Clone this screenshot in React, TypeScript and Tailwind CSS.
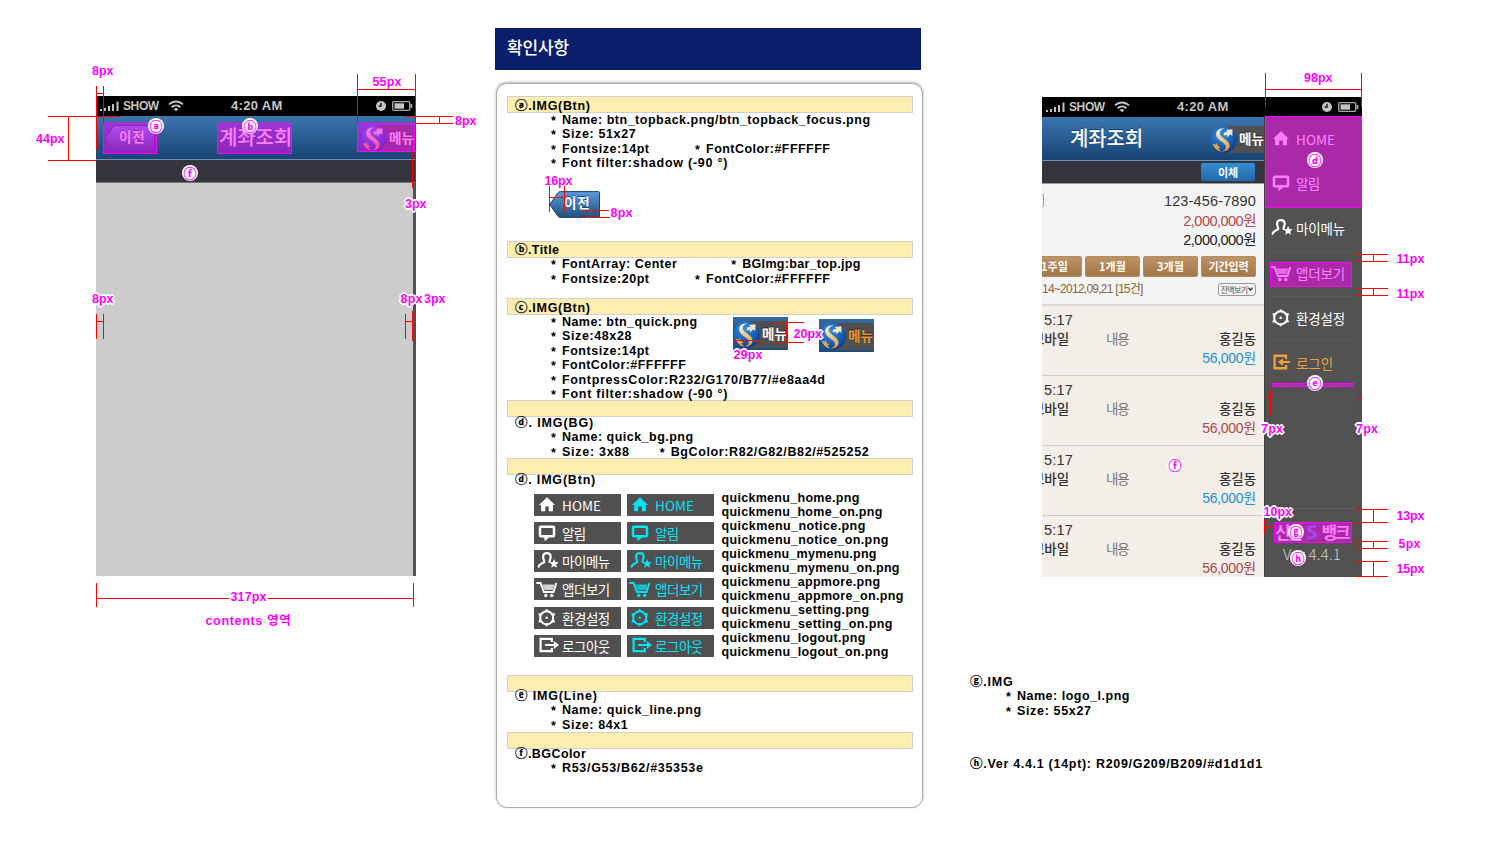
import { useLayoutEffect, useRef, type ReactNode } from "react";

/* Inline text whose tracking is adjusted so the run occupies a given width. */
function Fit({ w, className = "", children }: { w: number; className?: string; children: ReactNode }) {
  const ref = useRef<HTMLSpanElement>(null);
  useLayoutEffect(() => {
    const el = ref.current;
    if (!el) return;
    el.style.letterSpacing = "0px";
    const count = (el.textContent ?? "").length;
    const natural = el.getBoundingClientRect().width;
    el.style.letterSpacing = `${(w - natural) / Math.max(1, count - 0.5)}px`;
  }, [w, children]);
  return (
    <span ref={ref} className={`inline-block whitespace-pre ${className}`}>
      {children}
    </span>
  );
}

const korean = "font-['Noto_Sans_CJK_KR',sans-serif]";
const figures = "font-['Liberation_Sans','Noto_Sans_CJK_KR',sans-serif]";
const spec = "font-['Liberation_Sans','Noto_Sans_CJK_KR',sans-serif] text-[12.5px] font-bold";

/* ---------- shared phone pieces ---------- */

function StatusBar() {
  return (
    <div className="flex h-5 w-full shrink-0 items-center bg-black font-['Liberation_Sans',sans-serif] text-[13px] font-bold leading-5 text-[#c4c4c4]">
      <svg className="ml-1 shrink-0" width="19" height="10" viewBox="0 0 19 10" fill="#c4c4c4">
        <rect x="0" y="8" width="2" height="2" />
        <rect x="4" y="7" width="2" height="3" />
        <rect x="8" y="5" width="2" height="5" />
        <rect x="12" y="3" width="2" height="7" />
        <rect x="16.5" y="0.5" width="2" height="9.5" />
      </svg>
      <span className="ml-1 w-[45px] text-[12px]">
        <Fit w={36}>SHOW</Fit>
      </span>
      <svg className="shrink-0" width="16" height="12" viewBox="0 0 16 12" fill="none" stroke="#c4c4c4" strokeWidth="1.9">
        <path d="M1 4.4C5 .6 11 .6 15 4.4" />
        <path d="M3.6 7.2C6.2 4.9 9.8 4.9 12.4 7.2" />
        <path d="M8 11.2 5.6 8.9C7 7.8 9 7.8 10.4 8.9Z" fill="#c4c4c4" stroke="none" />
      </svg>
      <span className="ml-[47px] w-[145px]">
        <Fit w={51.5}>4:20 AM</Fit>
      </span>
      <svg className="shrink-0" width="10" height="10" viewBox="0 0 10 10">
        <circle cx="5" cy="5" r="5" fill="#c4c4c4" />
        <path d="M5 1.8V5.2H2.6" stroke="#000" strokeWidth="1.3" fill="none" />
      </svg>
      <svg className="ml-1.5 shrink-0" width="21" height="10" viewBox="0 0 21 10">
        <rect x=".7" y=".7" width="17" height="8.6" rx="1" fill="none" stroke="#aaa" strokeWidth="1.3" />
        <rect x="2.5" y="2.3" width="9.5" height="5.4" fill="#c4c4c4" />
        <path d="M18.5 3h1.8v4h-1.8z" fill="#aaa" />
      </svg>
    </div>
  );
}

function SLogo() {
  return (
    <svg className="relative shrink-0" width="27" height="27" viewBox="0 0 27 27">
      <defs>
        <radialGradient id="orb" cx=".4" cy=".3" r=".75">
          <stop offset="0" stopColor="#3a92e0" />
          <stop offset=".6" stopColor="#1560b8" />
          <stop offset="1" stopColor="#0c3a80" />
        </radialGradient>
        <linearGradient id="ribbon" x1="0" y1="0" x2="0" y2="1">
          <stop offset="0" stopColor="#fff" />
          <stop offset=".35" stopColor="#f6d9a0" />
          <stop offset="1" stopColor="#e0912f" />
        </linearGradient>
      </defs>
      <circle cx="13.5" cy="13.5" r="13.3" fill="url(#orb)" />
      <path d="M14 6.500 17.500 5.800 15.800 4 22.500 3.300 22.300 10 20.300 8.300 17.500 11.500 17.200 9 13.800 9.500Z" fill="#fbe6c4" />
      <path
        d="M14.500 2.600C9.500 1.600 5.500 4.800 6.200 9.200C7 14 13.200 15.800 15.200 19C16.800 21.800 15.400 24.300 11.500 25.600C16 26 19.600 23.600 19.600 19.600C19.500 14.800 12.200 12.200 10.300 9C8.700 6.200 10.500 3.600 14.500 2.600Z"
        fill="url(#ribbon)"
      />
      <path d="M2.500 17.500 5.500 18.800 6.500 16.800 7.800 20 10.800 21.500 8.300 22.200 11 25.500C7.500 25 4 22 2.500 17.500Z" fill="#eda640" />
    </svg>
  );
}

function MenuTab({ color = "text-white" }: { color?: string }) {
  return (
    <div className={`relative flex h-[27px] items-start ${korean} text-[13.5px] font-bold leading-[25px] ${color} [text-shadow:0_-1px_0_#222]`}>
      <div className="absolute inset-y-0 left-3 right-0 bg-[#505052]" />
      <SLogo />
      <Fit w={25} className="relative ml-[2px]">
        메뉴
      </Fit>
    </div>
  );
}

function BackButton({ id }: { id: string }) {
  return (
    <div className="grid h-[27px] w-[51px]">
      <svg className="col-start-1 row-start-1" width="51" height="27" viewBox="0 0 51 27">
        <defs>
          <linearGradient id={id} x1="0" y1="0" x2="0" y2="1">
            <stop offset="0" stopColor="#5c9bdd" />
            <stop offset=".5" stopColor="#3c74ad" />
            <stop offset="1" stopColor="#25527f" />
          </linearGradient>
        </defs>
        <path d="M.8 13.500 8.500 2.200Q9.600.6 11.500.6H49.500Q50.500.6 50.500 1.600V25.400Q50.500 26.400 49.500 26.400H11.500Q9.600 26.400 8.500 24.800Z" fill={`url(#${id})`} stroke="#1c4472" />
      </svg>
      <span className={`z-10 col-start-1 row-start-1 pl-[15px] ${korean} text-[13.500px] font-bold leading-[22px] text-white [text-shadow:0_-1px_0_#1c4472]`}>
        <Fit w={26}>이전</Fit>
      </span>
    </div>
  );
}

/* ---------- menu icons, drawn on a 24x22 field ---------- */

type IconName = "home" | "notice" | "mymenu" | "appmore" | "setting" | "logout" | "login";

function MenuIcon({ name }: { name: IconName }) {
  return (
    <svg className="shrink-0" width="24" height="22" viewBox="0 0 24 22" fill="none" stroke="currentColor">
      {name === "home" && (
        <path d="M11 3.200 19 11H16.900V17.300H12.800V12.600H9.200V17.300H5.100V11H3Z" fill="currentColor" stroke="none" />
      )}
      {name === "notice" && (
        <>
          <rect x="4" y="4.700" width="14" height="9.600" rx="1" strokeWidth="2.500" />
          <path d="M8 14.500H14L8.800 19.200Z" fill="currentColor" stroke="none" />
        </>
      )}
      {name === "mymenu" && (
        <>
          <path
            d="M2.600 16.600C3.600 14 5.400 13.300 7.700 12.500C9.400 11.800 7 10 7.100 6.700C7.200 2 14.600 2 14.700 6.700C14.700 9.200 13.200 10.500 13.600 12"
            strokeWidth="2.200"
            strokeLinecap="round"
          />
          <path d="M18.100 8.900 19.400 12 22.700 12.300 20.200 14.500 21 17.700 18.100 16 15.200 17.700 16 14.500 13.500 12.300 16.800 12Z" fill="currentColor" stroke="none" />
        </>
      )}
      {name === "appmore" && (
        <>
          <path d="M.3 5H4.500L8 14H17.500L20.300 5" strokeWidth="2" />
          <path d="M6.500 6.500H18.300L16.600 12H8.600Z" fill="currentColor" stroke="none" opacity=".75" />
          <circle cx="9.800" cy="17.500" r="1.700" fill="currentColor" stroke="none" />
          <circle cx="15.800" cy="17.500" r="1.700" fill="currentColor" stroke="none" />
        </>
      )}
      {name === "setting" && (
        <>
          <circle cx="10.700" cy="10.800" r="6.500" strokeWidth="2" />
          <path d="M10.700 1.800 13.200 4.800H8.200ZM10.700 19.800 8.200 16.800H13.200ZM2.200 6.500 6 6 3.700 10ZM19.200 6.500 15.400 6 17.700 10ZM2.200 15.200 6 15.700 3.700 11.700ZM19.200 15.200 15.400 15.700 17.700 11.700Z" fill="currentColor" stroke="none" />
          <circle cx="10.700" cy="10.800" r="1.300" fill="currentColor" stroke="none" />
        </>
      )}
      {name === "logout" && (
        <>
          <path d="M15.800 7V3.800H4.600V16.200H15.800V13" strokeWidth="2.200" />
          <path d="M9 10H18.500" strokeWidth="2" />
          <path d="M17.800 6 23 10 17.800 14Z" fill="currentColor" stroke="none" />
        </>
      )}
      {name === "login" && (
        <>
          <path d="M16 7V3.800H4.600V16.200H16V13" strokeWidth="2.400" />
          <path d="M12 10H20" strokeWidth="2" />
          <path d="M13 6.200 7.800 10 13 13.800Z" fill="currentColor" stroke="none" />
        </>
      )}
    </svg>
  );
}

function MenuLabel({ icon, text, w }: { icon: IconName; text: string; w: number }) {
  return (
    <div className={`flex h-[22px] items-center ${korean} text-[13.500px] font-normal leading-[22px]`}>
      <MenuIcon name={icon} />
      <Fit w={w} className="ml-[2px]">
        {text}
      </Fit>
    </div>
  );
}

/* ---------- left phone ---------- */

function ContentPhone() {
  return (
    <div className="flex h-[480px] w-80 flex-col bg-[#ccc]">
      <StatusBar />
      <div className="flex h-11 shrink-0 items-start border-b border-[#6d93bd] bg-linear-to-b from-[#3b76b0] to-[#194474] pl-2 pt-[9px]">
        <BackButton id="backA" />
        <span className={`ml-16 w-[73px] ${korean} text-[20px] font-medium leading-6 text-white`}>
          <Fit w={73}>계좌조회</Fit>
        </span>
        <div className="ml-auto w-[56px]">
          <MenuTab />
        </div>
      </div>
      <div className="h-[23px] shrink-0 border-b border-[#7b757c] bg-[#35353e]" />
      <div className="flex flex-1 justify-end">
        <div className="w-[3px] bg-[#525252]" />
      </div>
    </div>
  );
}

/* ---------- centre sheet ---------- */

type Piece = { t: string; w: number; star?: boolean; gap?: number };

function Line({ parts }: { parts: Piece[] }) {
  return (
    <div className={`flex h-[14.4px] whitespace-pre leading-[14.4px] ${parts[0].star ? "pl-11" : "pl-2"}`}>
      {parts.map((p, i) => (
        <span key={i} className="flex" style={{ marginLeft: p.gap ?? 0 }}>
          {p.star && <span className="w-[11px] pt-px">*</span>}
          {p.star ? (
            <Fit w={p.w - 11}>{p.t}</Fit>
          ) : (
            <Fit w={p.w}>
              <span className="[-webkit-text-stroke:0.250px_currentColor]">{p.t.slice(0, 1)}</span>
              {p.t.slice(1)}
            </Fit>
          )}
        </span>
      ))}
    </div>
  );
}

function Section({ h, pt, lines, children }: { h: number; pt: number; lines: Piece[][]; children?: ReactNode }) {
  return (
    <section className="grid shrink-0 content-start" style={{ height: h }}>
      <div className="col-start-1 row-start-1 h-[17px] border border-[#cfcfd2] bg-[#ffeeb0]" />
      <div className="z-10 col-start-1 row-start-1" style={{ paddingTop: pt }}>
        {lines.map((l, i) => (
          <Line key={i} parts={l} />
        ))}
        {children}
      </div>
    </section>
  );
}

const s = (t: string, w: number, gap?: number): Piece => ({ t, w, star: true, gap });

const menuItems: { icon: IconName; text: string; w: number; file: string; fw: number; onw: number }[] = [
  { icon: "home", text: "HOME", w: 39, file: "home", fw: 138, onw: 161 },
  { icon: "notice", text: "알림", w: 24, file: "notice", fw: 144, onw: 167 },
  { icon: "mymenu", text: "마이메뉴", w: 48, file: "mymenu", fw: 155, onw: 178 },
  { icon: "appmore", text: "앱더보기", w: 48, file: "appmore", fw: 158.7, onw: 182 },
  { icon: "setting", text: "환경설정", w: 48, file: "setting", fw: 147.7, onw: 171 },
  { icon: "logout", text: "로그아웃", w: 48, file: "logout", fw: 144, onw: 167 },
];

function QuickMenuSheet() {
  return (
    <div className="flex pl-[27px] pt-[6.600px]">
      {["text-white", "text-[#00e4f4]"].map((c) => (
        <div key={c} className="mr-1.5 flex w-[87px] flex-col gap-[6.200px]">
          {menuItems.map((m) => (
            <div key={m.icon} className={`h-[22px] bg-[#505050] pl-[2px] ${c}`}>
              <MenuLabel icon={m.icon} text={m.text} w={m.w} />
            </div>
          ))}
        </div>
      ))}
      <div className="-mt-[2.500px] ml-[1.500px] leading-[14px]">
        {menuItems.map((m) => (
          <div key={m.file} className="flex flex-col items-start">
            <Fit w={m.fw}>{`quickmenu_${m.file}.png`}</Fit>
            <Fit w={m.onw}>{`quickmenu_${m.file}_on.png`}</Fit>
          </div>
        ))}
      </div>
    </div>
  );
}

function SpecSheet() {
  return (
    <div className="flex w-[428px] flex-col">
      <h1 className={`h-[42px] w-[426px] bg-[#0b1e6b] pl-3 ${korean} text-[17px] font-medium leading-[38px] text-white`}>
        <Fit w={62}>확인사항</Fit>
      </h1>
      <div className={`ml-px mt-[13px] flex h-[725px] w-[427px] flex-col rounded-[11px] border border-[#adadad] bg-white pl-[10px] pr-[9px] pt-3 shadow-[0_-1px_3px_rgba(0,0,0,0.3)] ${spec}`}>
        <Section
          h={145}
          pt={2.500}
          lines={[
            [{ t: "ⓐ.IMG(Btn)", w: 75.3 }],
            [s("Name: btn_topback.png/btn_topback_focus.png", 319.3)],
            [s("Size: 51x27", 85)],
            [s("Fontsize:14pt", 98.3), s("FontColor:#FFFFFF", 135, 45.500)],
            [s("Font filter:shadow (-90 °)", 176.7)],
          ]}
        >
          <div className="pl-[42px] pt-[20.500px]">
            <BackButton id="backB" />
          </div>
        </Section>
        <Section
          h={57}
          pt={2}
          lines={[
            [{ t: "ⓑ.Title", w: 44.3 }],
            [s("FontArray: Center", 126), s("BGImg:bar_top.jpg", 129.3, 54)],
            [s("Fontsize:20pt", 98.3), s("FontColor:#FFFFFF", 135, 45.500)],
          ]}
        />
        <div className="relative">
          <Section
            h={102}
            pt={2.600}
            lines={[
              [{ t: "ⓒ.IMG(Btn)", w: 75.3 }],
              [s("Name: btn_quick.png", 146.3)],
              [s("Size:48x28", 80.7)],
              [s("Fontsize:14pt", 98.3)],
              [s("FontColor:#FFFFFF", 135)],
              [s("FontpressColor:R232/G170/B77/#e8aa4d", 274.3)],
              [s("Font filter:shadow (-90 °)", 176.7)],
            ]}
          />
          <div className="absolute left-[226px] top-[19px] z-20 flex items-start gap-[31px]">
            <div className="h-[33px] w-[55px] overflow-hidden bg-linear-to-b from-[#35699f] to-[#1d4c80] pt-1">
              <MenuTab />
            </div>
            <div className="mt-[2px] h-[33px] w-[55px] overflow-hidden bg-linear-to-b from-[#35699f] to-[#1d4c80] pt-1">
              <MenuTab color="text-[#e8952f]" />
            </div>
          </div>
        </div>
        <Section
          h={58}
          pt={15.800}
          lines={[
            [{ t: "ⓓ. IMG(BG)", w: 78.7 }],
            [s("Name: quick_bg.png", 142.3)],
            [s("Size: 3x88", 78.3), s("BgColor:R82/G82/B82/#525252", 209.3, 30)],
          ]}
        />
        <Section h={217} pt={14.900} lines={[[{ t: "ⓓ. IMG(Btn)", w: 80.7 }]]}>
          <QuickMenuSheet />
        </Section>
        <Section
          h={57}
          pt={14}
          lines={[[{ t: "ⓔ IMG(Line)", w: 82.3 }], [s("Name: quick_line.png", 150.3)], [s("Size: 84x1", 77)]]}
        />
        <Section h={60} pt={14.500} lines={[[{ t: "ⓕ.BGColor", w: 71 }], [s("R53/G53/B62/#35353e", 152.3)]]} />
      </div>
    </div>
  );
}

/* ---------- right phone ---------- */

function Period({ text, w, className = "" }: { text: string; w: number; className?: string }) {
  return (
    <div className={`flex h-[21px] w-[55px] shrink-0 items-center justify-center rounded-[2px] border border-[#b28c63] bg-linear-to-b from-[#bd9265] to-[#a3774a] text-[11px] font-bold text-white ${className}`}>
      <Fit w={w}>{text}</Fit>
    </div>
  );
}

function Transaction({ color }: { color: string }) {
  return (
    <div className="h-[70px] shrink-0 border-b border-[#cdcbc8] bg-[#f4eee8] pr-2 pt-[5px] leading-[19px] text-[#333]">
      <div className={`pl-[2px] text-[14.500px] ${figures}`}>
        <Fit w={29}>5:17</Fit>
      </div>
      <div className="-mt-px flex items-center text-[13.500px] font-medium">
        <span className="-ml-[10px] w-[74px]">
          <Fit w={37}>모바일</Fit>
        </span>
        <Fit w={23} className="font-normal text-[#777]">
          내용
        </Fit>
        <Fit w={37} className="ml-auto">
          홍길동
        </Fit>
      </div>
      <div className={`pt-px text-right text-[14px] ${figures} ${color}`}>
        <Fit w={54}>56,000원</Fit>
      </div>
    </div>
  );
}

function Account() {
  return (
    <div className={`flex h-[460px] w-[222px] flex-col overflow-hidden bg-[#f4f4f4] ${korean}`}>
      <div className="flex h-11 shrink-0 items-start border-b border-[#6d93bd] bg-linear-to-b from-[#3b76b0] to-[#194474] pl-7 pt-[9px]">
        <span className="text-[20px] font-medium leading-6 text-white [text-shadow:0_-1px_0_#17406e]">
          <Fit w={73}>계좌조회</Fit>
        </span>
        <div className="ml-auto w-[54px]">
          <MenuTab />
        </div>
      </div>
      <div className="flex h-[23px] shrink-0 items-start justify-end border-b border-[#999] bg-[#35353e] pr-[9px] pt-[2px]">
        <div className="flex h-[18px] w-[54px] items-center justify-center rounded-[2px] bg-linear-to-b from-[#3390d2] to-[#2368ac] text-[11px] font-bold leading-4 text-white">
          <Fit w={20}>이체</Fit>
        </div>
      </div>
      <div className="flex h-[72px] shrink-0 justify-between pr-2 pt-2 text-right text-[14.500px] leading-[19.500px]">
        <div className="mt-[2px] h-[13px] w-[2px] rounded-r-sm border-y border-r border-[#999]" />
        <div className={`flex flex-col items-end ${figures}`}>
          <Fit w={92} className="text-[#333]">
            123-456-7890
          </Fit>
          <Fit w={73} className="text-[#b2494e]">
            2,000,000원
          </Fit>
          <Fit w={73} className="text-[#222]">
            2,000,000원
          </Fit>
        </div>
      </div>
      <div className="flex shrink-0 justify-end gap-[3px] pr-2">
        <Period text="1주일" w={27} className="-ml-4" />
        <Period text="1개월" w={27} />
        <Period text="3개월" w={27} />
        <Period text="기간입력" w={40} />
      </div>
      <div className="flex h-[29px] shrink-0 items-center justify-between border-b-2 border-[#d8d8d8] pb-[3px] pr-2 text-[12px] text-[#8d6534]">
        <Fit w={101} className={figures}>
          14~2012,09,21 [15건]
        </Fit>
        <div className="flex h-[13px] w-[38px] items-center justify-center gap-px rounded-[3px] border border-[#999] bg-[#f0f0f0] text-[8px] leading-[11px] text-[#555]">
          <Fit w={27}>잔액보기</Fit>
          <svg width="5" height="4" viewBox="0 0 5 4" fill="none" stroke="#333" strokeWidth="1.300">
            <path d="M.5.800 2.500 3 4.500.800" />
          </svg>
        </div>
      </div>
      <Transaction color="text-[#1a91da]" />
      <Transaction color="text-[#a8494c]" />
      <Transaction color="text-[#1a91da]" />
      <Transaction color="text-[#a8494c]" />
    </div>
  );
}

const sideItems: { icon: IconName; text: string; w: number; tone: string }[] = [
  { icon: "home", text: "HOME", w: 39, tone: "text-white" },
  { icon: "notice", text: "알림", w: 24, tone: "text-white" },
  { icon: "mymenu", text: "마이메뉴", w: 49, tone: "text-white" },
  { icon: "appmore", text: "앱더보기", w: 49, tone: "text-white" },
  { icon: "setting", text: "환경설정", w: 49, tone: "text-white" },
  { icon: "login", text: "로그인", w: 37, tone: "text-[#e8a23c]" },
];

function QuickSide() {
  return (
    <div className={`flex h-[460px] w-[98px] flex-col border-l border-[#3e3e3e] bg-[#525252] pl-[6px] ${korean}`}>
      {sideItems.map((m) => (
        <div key={m.icon} className={`-ml-px h-[44.900px] w-[84px] shrink-0 border-b border-[#5b5b5b] pt-[10.500px] ${m.tone}`}>
          <MenuLabel icon={m.icon} text={m.text} w={m.w} />
        </div>
      ))}
      <div className="mt-[122px] w-[84px] whitespace-nowrap border-t border-[#5f5f5f] pl-[4px] pt-[12px]">
        <div className="flex h-[21px] text-[17px] font-bold leading-[21px] text-white">
          <Fit w={27}>신한</Fit>
          <span className="pl-[6px] pr-[4px] font-['Open_Sans',sans-serif] text-[20px] text-[#4a90ff]">S</span>
          <Fit w={28}>뱅크</Fit>
        </div>
        <div className="pl-[8px] pt-px text-[15px] font-light leading-[22px] text-[#d1d1d1]">
          <Fit w={58}>Ver 4.4.1</Fit>
        </div>
      </div>
    </div>
  );
}

function MenuPhone() {
  return (
    <div className="flex h-[480px] w-80 flex-col">
      <StatusBar />
      <div className="flex">
        <Account />
        <QuickSide />
      </div>
    </div>
  );
}

/* ---------- measurement overlay ---------- */

/* [x, y, length] in whole pixels */
const hLines = [
  [96, 93, 8], [48, 116, 72], [48, 160, 48], [357, 89, 59], [405, 116, 48], [405, 123, 48], [412, 174, 4],
  [96, 321, 8], [405, 321, 8], [412, 327, 4], [96, 598, 133], [268, 598, 146],
  [549, 197, 16], [581, 210, 28], [581, 217, 29], [733, 340, 29], [776, 322, 28], [776, 342, 28],
  [1265, 89, 97], [1355, 254, 33], [1355, 261, 33], [1355, 288, 33], [1355, 295, 33],
  [1265, 397, 6], [1357, 397, 5], [1264, 527, 10], [1355, 509, 33], [1355, 522, 33],
  [1355, 541, 33], [1355, 548, 33], [1355, 561, 33], [1355, 576, 33],
];
const vLines = [
  [96, 86, 64], [103, 86, 41], [68, 116, 45], [357, 74, 69], [415, 74, 114], [412, 152, 36], [439, 116, 8],
  [96, 314, 25], [103, 314, 25], [405, 314, 25], [412, 311, 30], [415, 311, 30], [96, 583, 24], [413, 583, 24],
  [549, 186, 26], [564, 186, 26], [595, 210, 8], [733, 324, 25], [761, 324, 25], [786, 322, 21],
  [1265, 73, 34], [1361, 73, 34], [1373, 254, 8], [1373, 288, 8],
  [1265, 390, 25], [1270, 390, 25], [1357, 390, 25], [1361, 390, 25], [1264, 520, 14],
  [1373, 509, 14], [1373, 541, 8], [1373, 561, 16],
];
/* [x, y, width, height] */
const zones = [
  [103, 123, 54, 31], [217, 123, 75, 31], [357, 123, 58, 29],
  [1265, 116, 97, 92], [1270, 262, 82, 25], [1272, 383, 82, 4], [1274, 522, 78, 21],
];
const labels: { t: string; x: number; y: number; w: number; halo?: boolean }[] = [
  { t: "8px", x: 92, y: 71, w: 21.5 },
  { t: "55px", x: 372.5, y: 82, w: 29 },
  { t: "8px", x: 455, y: 121, w: 21.5 },
  { t: "3px", x: 405, y: 204, w: 21.5, halo: true },
  { t: "44px", x: 36, y: 139, w: 28.5 },
  { t: "8px", x: 92, y: 299, w: 21.5, halo: true },
  { t: "8px", x: 400.5, y: 299, w: 22, halo: true },
  { t: "3px", x: 424, y: 299, w: 21.5 },
  { t: "317px", x: 230.5, y: 597, w: 36 },
  { t: "contents 영역", x: 205.5, y: 621, w: 85.5 },
  { t: "16px", x: 544.5, y: 181, w: 28 },
  { t: "8px", x: 610.5, y: 213, w: 22 },
  { t: "29px", x: 733.5, y: 355, w: 29, halo: true },
  { t: "20px", x: 793.5, y: 334, w: 28.5, halo: true },
  { t: "98px", x: 1304, y: 78, w: 28.5 },
  { t: "11px", x: 1396.5, y: 259, w: 28 },
  { t: "11px", x: 1396.5, y: 294, w: 28 },
  { t: "7px", x: 1261, y: 429, w: 22, halo: true },
  { t: "7px", x: 1356, y: 429, w: 22, halo: true },
  { t: "10px", x: 1263.5, y: 512, w: 28.5, halo: true },
  { t: "13px", x: 1396.5, y: 516, w: 28 },
  { t: "5px", x: 1398.5, y: 544, w: 22 },
  { t: "15px", x: 1396.5, y: 569, w: 28 },
];
const marks: [string, number, number][] = [
  ["ⓐ", 156, 125.5], ["ⓑ", 250, 125.5], ["ⓕ", 190, 172.5], ["ⓓ", 1315, 159.5],
  ["ⓔ", 1315, 382.5], ["ⓖ", 1296, 531.5], ["ⓗ", 1298, 557.5], ["ⓕ", 1175, 464.5],
];

function Measurements() {
  return (
    <div className={`pointer-events-none absolute inset-0 z-30 ${spec} text-[#ff00ff]`}>
      <svg className="absolute inset-0" width="1500" height="850" shapeRendering="crispEdges">
        {hLines.map(([x, y, l], i) => (
          <rect key={`h${i}`} x={x} y={y} width={l} height="1" fill="#f00" />
        ))}
        {vLines.map(([x, y, l], i) => (
          <rect key={`v${i}`} x={x} y={y} width="1" height={l} fill="#f00" />
        ))}
        {zones.map(([x, y, w, h], i) => (
          <rect key={`z${i}`} x={x + 0.5} y={y + 0.5} width={w - 1} height={h - 1} fill="#f0f" fillOpacity=".5" stroke="#f0f" />
        ))}
      </svg>
      {labels.map((l, i) => (
        <span
          key={i}
          className={`absolute leading-4 ${l.halo ? "[text-shadow:2px_0_0_#fff,-2px_0_0_#fff,0_2px_0_#fff,0_-2px_0_#fff,1px_1px_0_#fff,-1px_1px_0_#fff,1px_-1px_0_#fff,-1px_-1px_0_#fff]" : ""}`}
          style={{ left: l.x, top: l.y - 8 }}
        >
          <Fit w={l.w}>{l.t}</Fit>
        </span>
      ))}
      {marks.map(([t, x, y], i) => (
        <span
          key={i}
          className={`absolute flex size-4 items-center justify-center rounded-full bg-white ${korean} text-[13px] leading-4 [-webkit-text-stroke:0.250px_currentColor]`}
          style={{ left: x - 8, top: y - 8 }}
        >
          {t}
        </span>
      ))}
    </div>
  );
}

export default function App() {
  return (
    <main className="relative flex h-[850px] w-[1500px] items-start overflow-hidden bg-white">
      <div className="w-[495px] shrink-0 pl-24 pt-24">
        <ContentPhone />
      </div>
      <div className="w-[428px] shrink-0 pt-7">
        <SpecSheet />
      </div>
      <div className="flex flex-1 flex-col pl-[39px] pt-[97px]">
        <div className="pl-20">
          <MenuPhone />
        </div>
        <div className={`mt-[98px] ${spec}`}>
          <Line parts={[{ t: "ⓖ.IMG", w: 43 }]} />
          <Line parts={[s("Name: logo_l.png", 123.7)]} />
          <Line parts={[s("Size: 55x27", 85.3)]} />
          <div className="h-[38.500px]" />
          <Line parts={[{ t: "ⓗ.Ver 4.4.1 (14pt): R209/G209/B209/#d1d1d1", w: 292.5 }]} />
        </div>
      </div>
      <Measurements />
    </main>
  );
}
